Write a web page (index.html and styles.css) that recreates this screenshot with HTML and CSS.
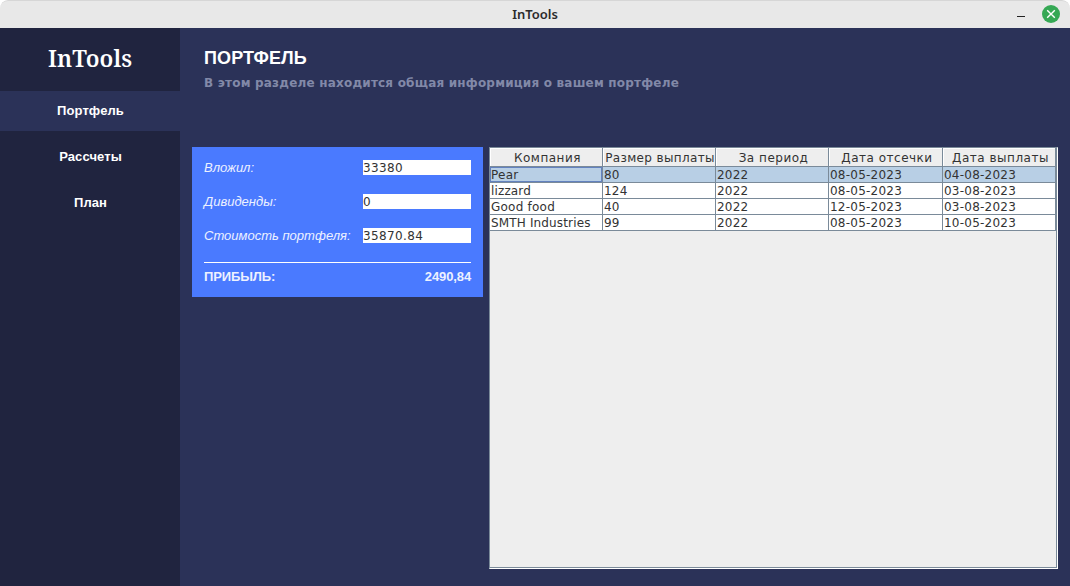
FILE: index.html
```html
<!DOCTYPE html>
<html lang="ru">
<head>
<meta charset="utf-8">
<title>InTools</title>
<link rel="stylesheet" href="styles.css">
</head>
<body>
<div class="window">
  <header class="titlebar">
    <span></span>
    <span class="window-title">InTools</span>
    <div class="controls">
      <svg class="minimize" width="8" height="18" viewBox="0 0 8 18"><path d="M0 11.5H8" stroke="#222" stroke-width="1"/></svg>
      <svg width="18" height="18" viewBox="0 0 18 18"><circle cx="9" cy="9" r="9" fill="#35a854"/><path d="M5.2 5.2L12.8 12.8M12.8 5.2L5.2 12.8" stroke="#fff" stroke-width="1.4"/></svg>
    </div>
  </header>
  <div class="body">
    <nav class="sidebar">
      <div class="logo"><span>InTools</span></div>
      <a class="nav-item active">Портфель</a>
      <a class="nav-item">Рассчеты</a>
      <a class="nav-item">План</a>
    </nav>
    <main class="main">
      <div class="heading">
        <h1>ПОРТФЕЛЬ</h1>
        <p>В этом разделе находится общая информиция о вашем портфеле</p>
      </div>
      <div class="content">
        <section class="card">
          <div class="field"><label>Вложил:</label><div class="input">33380</div></div>
          <div class="field"><label>Дивиденды:</label><div class="input">0</div></div>
          <div class="field"><label>Стоимость портфеля:</label><div class="input">35870.84</div></div>
          <div class="profit"><span>ПРИБЫЛЬ:</span><span class="sum">2490,84</span></div>
        </section>
        <section class="pane">
          <div class="table">
            <div class="row head"><div>Компания</div><div class="tight">Размер выплаты</div><div>За период</div><div>Дата отсечки</div><div>Дата выплаты</div></div>
            <div class="row selected"><div class="focus">Pear</div><div>80</div><div>2022</div><div>08-05-2023</div><div>04-08-2023</div></div>
            <div class="row"><div class="word">lizzard</div><div>124</div><div>2022</div><div>08-05-2023</div><div>03-08-2023</div></div>
            <div class="row"><div>Good food</div><div>40</div><div>2022</div><div>12-05-2023</div><div>03-08-2023</div></div>
            <div class="row"><div class="word">SMTH Industries</div><div>99</div><div>2022</div><div>08-05-2023</div><div>10-05-2023</div></div>
          </div>
        </section>
      </div>
    </main>
  </div>
</div>
</body>
</html>
```
FILE: styles.css
```css
* { box-sizing: border-box; }
body { margin: 0; background: #fff; overflow: hidden; }
.window { width: 1070px; height: 586px; display: flex; flex-direction: column; border-radius: 8px 8px 0 0; overflow: hidden; }
.titlebar { height: 28px; display: grid; grid-template-columns: 1fr auto 1fr; align-items: center; background: #e8e8e8; border-top: 1px solid #d6d6d6; border-radius: 8px 8px 0 0; }
.window-title { font: 600 13px/18px "Noto Sans", sans-serif; color: #2b2b2b; padding-bottom: 2px; }
.controls { display: flex; justify-content: flex-end; gap: 17px; padding: 0 10px 1px 0; }
.body { flex: 1; display: flex; }
.sidebar { width: 180px; background: #20243f; display: flex; flex-direction: column; gap: 6px; }
.logo { height: 57px; padding-top: 15px; text-align: center; font: 600 23px/31px "Noto Serif", "Liberation Serif", serif; color: #fff; }
.nav-item { height: 40px; text-align: center; font: bold 13px/39px "Liberation Sans", sans-serif; color: #fff; letter-spacing: 0.1px; padding-left: 1px; }
.nav-item.active { background: #2b3258; }
.main { flex: 1; background: #2b3258; display: flex; flex-direction: column; padding: 0 12px 17px; }
.heading { height: 119px; padding: 20px 12px 0; }
h1 { margin: 0; font: bold 18px/20px "Liberation Sans", sans-serif; color: #fff; letter-spacing: 0.1px; }
p { margin: 7px 0 0; font: bold 12px/17px "DejaVu Sans", sans-serif; color: #8289a8; letter-spacing: 0.2px; white-space: nowrap; }
.content { flex: 1; display: flex; align-items: flex-start; gap: 6px; }
.card { width: 291px; height: 150px; background: #4a7aff; padding: 13px 12px 0; }
.field { display: flex; justify-content: space-between; height: 15px; margin-bottom: 19px; }
.field label { font: italic 13px/15px "Liberation Sans", sans-serif; color: #edf1ff; white-space: nowrap; }
.input { width: 108px; height: 15px; background: #fff; font: 12px/17px "DejaVu Sans", sans-serif; color: #333; letter-spacing: 0.37px; }
.profit { border-top: 1px solid #fff; display: flex; justify-content: space-between; font: bold 13px/27px "Liberation Sans", sans-serif; color: #edf1ff; letter-spacing: -0.12px; }
.pane { width: 569px; height: 422px; background: #eee; border: 1px solid #7a8a99; border-right: 1px solid #fff; border-bottom: 1px solid #fff; }
.table { height: 420px; border-right: 1px solid #7a8a99; border-bottom: 1px solid #7a8a99; }
.row { display: grid; grid-template-columns: 113px 113px 113px 114px 113px; height: 16px; font: 12px/17px "DejaVu Sans", sans-serif; color: #333; letter-spacing: 0.23px; }
.row > div { height: 16px; background: #fff; border-right: 1px solid #7a8a99; border-bottom: 1px solid #7a8a99; padding-left: 1px; white-space: nowrap; overflow: hidden; }
.row > .word { letter-spacing: 0.15px; }
.row.head { height: 19px; line-height: 20px; letter-spacing: 0.5px; }
.row.head > div { height: 19px; background: #eee; text-align: center; padding-left: 3px; box-shadow: inset 1px 1px #fff; }
.row.head > .tight { letter-spacing: 0.35px; padding-left: 2px; }
.row.selected > div { background: #b8cfe5; }
.row.selected > .focus { padding-left: 0; line-height: 15px; border: 1px solid #6382bf; border-right-color: #7a8a99; border-bottom-color: #7a8a99; box-shadow: inset -1px -1px #6382bf; }
```
